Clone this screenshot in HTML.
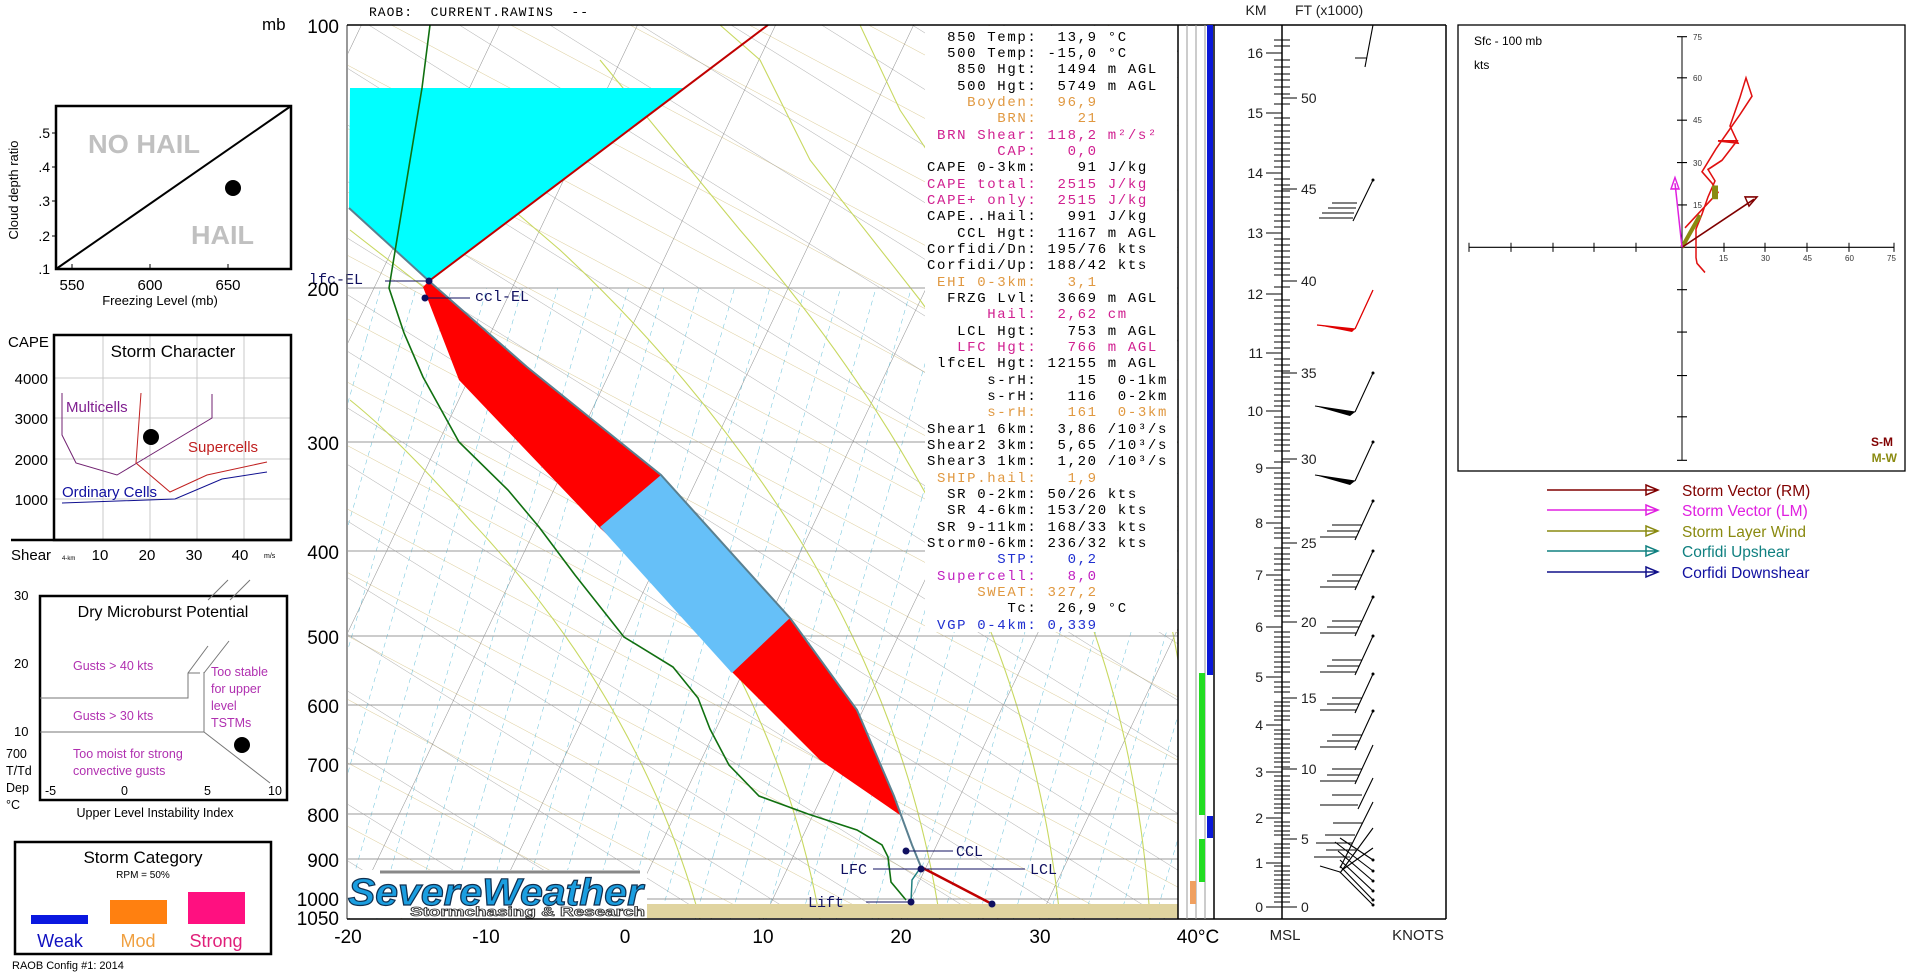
<!DOCTYPE html>
<html><head><meta charset="utf-8"><style>
html,body{margin:0;padding:0;background:#fff;width:1920px;height:980px;overflow:hidden}
svg{display:block}
text{font-family:"Liberation Sans",Arial,sans-serif}
text.mono{font-family:"Liberation Mono","Courier New",monospace;font-size:14px;letter-spacing:1.64px;white-space:pre}
text.lab{font-family:"Liberation Mono","Courier New",monospace;font-size:15px;fill:#101060}
</style></head><body>
<svg width="1920" height="980" viewBox="0 0 1920 980" xmlns="http://www.w3.org/2000/svg">
<defs>
<pattern id="iso" patternUnits="userSpaceOnUse" width="124.6" height="400" patternTransform="translate(625 919) rotate(25.5)">
<line x1="0" y1="0" x2="0" y2="400" stroke="#707070" stroke-width="0.8"/></pattern>
<pattern id="dn" patternUnits="userSpaceOnUse" width="48" height="400" patternTransform="translate(600 0) rotate(-58)">
<line x1="0" y1="0" x2="0" y2="400" stroke="#909090" stroke-width="0.7"/></pattern>
<pattern id="tan" patternUnits="userSpaceOnUse" width="56" height="400" patternTransform="translate(620 20) rotate(-62)">
<line x1="0" y1="0" x2="0" y2="400" stroke="#d8c890" stroke-width="0.9"/></pattern>
<pattern id="mr" patternUnits="userSpaceOnUse" width="34" height="400" patternTransform="translate(640 0) rotate(16)">
<line x1="0" y1="0" x2="0" y2="400" stroke="#40b0d0" stroke-width="0.8" stroke-dasharray="5,4"/></pattern>
<clipPath id="plot"><rect x="348" y="25" width="830" height="894"/></clipPath>
<clipPath id="low"><rect x="348" y="288" width="830" height="631"/></clipPath>
</defs>

<g clip-path="url(#plot)">
<rect x="348" y="25" width="830" height="894" fill="url(#tan)"/>
<rect x="348" y="25" width="830" height="894" fill="url(#dn)"/>
<rect x="348" y="25" width="830" height="894" fill="url(#iso)"/>
<rect x="348" y="288" width="830" height="631" fill="url(#mr)" clip-path="url(#low)"/>
<g fill="none" stroke="#c8d860" stroke-width="1.1">
<path d="M700 919 Q640 700 470 520 Q400 440 350 400"/>
<path d="M820 919 Q780 700 640 520 Q540 400 440 300 L350 230"/>
<path d="M940 919 Q910 720 800 540 Q700 380 560 250 L420 130"/>
<path d="M1060 919 Q1040 720 950 540 Q870 380 740 230 L600 60"/>
<path d="M1150 919 Q1140 760 1090 620 Q1030 450 920 300 L810 160 L760 60 L720 25"/>
<path d="M1178 660 Q1150 500 1080 380 L980 230 L900 110 L860 25"/>
</g>
<g stroke="#999" stroke-width="1">
<line x1="348" y1="288" x2="1178" y2="288"/><line x1="348" y1="442" x2="1178" y2="442"/>
<line x1="348" y1="551" x2="1178" y2="551"/><line x1="348" y1="636" x2="1178" y2="636"/>
<line x1="348" y1="705" x2="1178" y2="705"/><line x1="348" y1="764" x2="1178" y2="764"/>
<line x1="348" y1="814" x2="1178" y2="814"/><line x1="348" y1="859" x2="1178" y2="859"/>
<line x1="348" y1="899" x2="1178" y2="899"/>
</g>
</g>
<rect x="925" y="26" width="252" height="606" fill="#fff"/>

<polygon points="350,88 683,88 429,281 349,208" fill="#00ffff"/>
<line x1="349" y1="208" x2="429" y2="281" stroke="#5a8090" stroke-width="2"/>
<line x1="429" y1="281" x2="768" y2="25" stroke="#c00000" stroke-width="2"/>
<polygon points="429,281 527,367 661,475 790,618 857,710 894,796 912,845 921,867 900,815 820,760 732,672 666,588 600,528 459,380 423,287" fill="#ff0000"/>
<polygon points="661,475 790,618 732,673 600,527" fill="#66c0f8"/>
<polyline points="429,281 527,367 661,475 790,618 857,710 894,796 912,845 921,867" fill="none" stroke="#5a8090" stroke-width="2"/>
<line x1="921" y1="867" x2="992" y2="904" stroke="#c00000" stroke-width="2.5"/>
<polyline points="921,867 912,880 911,902" fill="none" stroke="#208080" stroke-width="1.5"/>
<polyline points="430,25 422,88 398,233 389,288 404,333 423,377 459,442 508,490 539,527 575,575 624,637 673,667 698,698 710,729 729,765 759,796 808,814 857,830 882,845 888,857 891,882 906,900" fill="none" stroke="#107010" stroke-width="1.6"/>
<rect x="646" y="904" width="532" height="14" fill="#e0d4a0"/>
<g fill="#101060">
<circle cx="429" cy="281" r="3.5"/><circle cx="425" cy="298" r="3.5"/>
<circle cx="906" cy="851" r="3.5"/><circle cx="921" cy="869" r="3.5"/>
<circle cx="911" cy="902" r="3.5"/><circle cx="992" cy="904" r="3.5"/>
</g>
<g stroke="#101060" stroke-width="1">
<line x1="385" y1="281" x2="429" y2="281"/><line x1="425" y1="298" x2="470" y2="298"/>
<line x1="906" y1="851" x2="953" y2="851"/><line x1="921" y1="869" x2="1025" y2="869"/>
<line x1="873" y1="869" x2="921" y2="869"/><line x1="866" y1="902" x2="911" y2="902"/>
</g>
<text x="309" y="284" class="lab">lfc-EL</text>
<text x="475" y="301" class="lab">ccl-EL</text>
<text x="956" y="856" class="lab">CCL</text>
<text x="1030" y="874" class="lab">LCL</text>
<text x="840" y="874" class="lab">LFC</text>
<text x="808" y="907" class="lab">Lift</text>

<rect x="345" y="870" width="302" height="48" fill="#fff"/>
<line x1="380" y1="872" x2="640" y2="872" stroke="#888" stroke-width="3"/>
<text x="348" y="905" font-size="38" font-weight="bold" font-style="italic" fill="#1a9ee0" stroke="#103050" stroke-width="1.2" textLength="295" lengthAdjust="spacingAndGlyphs">SevereWeather</text>
<text x="410" y="916" font-size="13" font-weight="bold" fill="#fff" stroke="#333" stroke-width="0.8" textLength="235" lengthAdjust="spacingAndGlyphs">Stormchasing &amp; Research</text>

<line x1="347" y1="25" x2="347" y2="919" stroke="#555" stroke-width="1.2"/>
<line x1="347" y1="25" x2="1446" y2="25" stroke="#000" stroke-width="1.5"/>
<line x1="347" y1="919" x2="1446" y2="919" stroke="#000" stroke-width="1.5"/>
<line x1="1446" y1="25" x2="1446" y2="919" stroke="#000" stroke-width="1.5"/>
<line x1="1178" y1="25" x2="1178" y2="919" stroke="#000" stroke-width="1.5"/>
<line x1="1187" y1="25" x2="1187" y2="919" stroke="#999"/>
<line x1="1196" y1="25" x2="1196" y2="919" stroke="#999"/>
<line x1="1205" y1="25" x2="1205" y2="919" stroke="#999"/>
<line x1="1214" y1="25" x2="1214" y2="919" stroke="#000" stroke-width="1.5"/>
<rect x="1207" y="25" width="6" height="650" fill="#0a18d8"/>
<rect x="1207" y="816" width="6" height="22" fill="#0a18d8"/>
<rect x="1199" y="673" width="6" height="142" fill="#22dd22"/>
<rect x="1199" y="839" width="6" height="43" fill="#22dd22"/>
<rect x="1190" y="881" width="6" height="23" fill="#f0a060"/>

<g font-size="19" text-anchor="end" fill="#000">
<text x="339" y="33">100</text><text x="339" y="296">200</text><text x="339" y="450">300</text>
<text x="339" y="559">400</text><text x="339" y="644">500</text><text x="339" y="713">600</text>
<text x="339" y="772">700</text><text x="339" y="822">800</text><text x="339" y="867">900</text>
<text x="339" y="906">1000</text><text x="339" y="925">1050</text>
</g>
<text x="262" y="30" font-size="17">mb</text>
<text x="369" y="16" class="mono" style="font-size:13px;letter-spacing:1px">RAOB:  CURRENT.RAWINS  --</text>
<g font-size="19" text-anchor="middle">
<text x="348" y="943">-20</text><text x="486" y="943">-10</text><text x="625" y="943">0</text>
<text x="763" y="943">10</text><text x="901" y="943">20</text><text x="1040" y="943">30</text>
<text x="1198" y="943">40°C</text>
</g>

<g>
<text x="927" y="41" class="mono">  850 Temp:  13,9 °C</text>
<text x="927" y="57" class="mono">  500 Temp: -15,0 °C</text>
<text x="927" y="73" class="mono">   850 Hgt:  1494 m AGL</text>
<text x="927" y="90" class="mono">   500 Hgt:  5749 m AGL</text>
<text x="927" y="106" class="mono" fill="#e09840">    Boyden:  96,9</text>
<text x="927" y="122" class="mono" fill="#e09840">       BRN:    21</text>
<text x="927" y="139" class="mono" fill="#d02090"> BRN Shear: 118,2 m²/s²</text>
<text x="927" y="155" class="mono" fill="#d02090">       CAP:   0,0</text>
<text x="927" y="171" class="mono">CAPE 0-3km:    91 J/kg</text>
<text x="927" y="188" class="mono" fill="#d02090">CAPE total:  2515 J/kg</text>
<text x="927" y="204" class="mono" fill="#d02090">CAPE+ only:  2515 J/kg</text>
<text x="927" y="220" class="mono">CAPE..Hail:   991 J/kg</text>
<text x="927" y="237" class="mono">   CCL Hgt:  1167 m AGL</text>
<text x="927" y="253" class="mono">Corfidi/Dn: 195/76 kts</text>
<text x="927" y="269" class="mono">Corfidi/Up: 188/42 kts</text>
<text x="927" y="286" class="mono" fill="#e09840"> EHI 0-3km:   3,1</text>
<text x="927" y="302" class="mono">  FRZG Lvl:  3669 m AGL</text>
<text x="927" y="318" class="mono" fill="#d02090">      Hail:  2,62 cm</text>
<text x="927" y="335" class="mono">   LCL Hgt:   753 m AGL</text>
<text x="927" y="351" class="mono" fill="#d02090">   LFC Hgt:   766 m AGL</text>
<text x="927" y="367" class="mono"> lfcEL Hgt: 12155 m AGL</text>
<text x="927" y="384" class="mono">      s-rH:    15  0-1km</text>
<text x="927" y="400" class="mono">      s-rH:   116  0-2km</text>
<text x="927" y="416" class="mono" fill="#e09840">      s-rH:   161  0-3km</text>
<text x="927" y="433" class="mono">Shear1 6km:  3,86 /10³/s</text>
<text x="927" y="449" class="mono">Shear2 3km:  5,65 /10³/s</text>
<text x="927" y="465" class="mono">Shear3 1km:  1,20 /10³/s</text>
<text x="927" y="482" class="mono" fill="#e09840"> SHIP.hail:   1,9</text>
<text x="927" y="498" class="mono">  SR 0-2km: 50/26 kts</text>
<text x="927" y="514" class="mono">  SR 4-6km: 153/20 kts</text>
<text x="927" y="531" class="mono"> SR 9-11km: 168/33 kts</text>
<text x="927" y="547" class="mono">Storm0-6km: 236/32 kts</text>
<text x="927" y="563" class="mono" fill="#2030d0">       STP:   0,2</text>
<text x="927" y="580" class="mono" fill="#c020c0"> Supercell:   8,0</text>
<text x="927" y="596" class="mono" fill="#e09840">     SWEAT: 327,2</text>
<text x="927" y="612" class="mono">        Tc:  26,9 °C</text>
<text x="927" y="629" class="mono" fill="#2030d0"> VGP 0-4km: 0,339</text>
</g>

<line x1="1282" y1="25" x2="1282" y2="919" stroke="#000" stroke-width="1.5"/>
<g stroke="#000" stroke-width="1">
<path d="M1274 40h16M1274 46h16M1274 60h16M1274 67h16M1274 74h16M1274 80h16M1274 87h16M1274 94h16M1274 104h16M1274 118h16M1274 125h16M1274 131h16M1274 137h16M1274 143h16M1274 149h16M1274 155h16M1274 161h16M1274 167h16M1274 179h16M1274 185h16M1274 191h16M1274 197h16M1274 203h16M1274 209h16M1274 215h16M1274 221h16M1274 227h16M1274 239h16M1274 245h16M1274 251h16M1274 257h16M1274 263h16M1274 269h16M1274 275h16M1274 287h16M1274 300h16M1274 306h16M1274 312h16M1274 318h16M1274 324h16M1274 330h16M1274 336h16M1274 342h16M1274 348h16M1274 359h16M1274 365h16M1274 371h16M1274 377h16M1274 383h16M1274 389h16M1274 395h16M1274 401h16M1274 406h16M1274 417h16M1274 423h16M1274 428h16M1274 434h16M1274 440h16M1274 445h16M1274 451h16M1274 462h16M1274 473h16M1274 478h16M1274 484h16M1274 489h16M1274 495h16M1274 500h16M1274 506h16M1274 511h16M1274 517h16M1274 528h16M1274 533h16M1274 538h16M1274 548h16M1274 554h16M1274 559h16M1274 564h16M1274 570h16M1274 580h16M1274 585h16M1274 590h16M1274 596h16M1274 601h16M1274 606h16M1274 611h16M1274 616h16M1274 632h16M1274 637h16M1274 642h16M1274 647h16M1274 652h16M1274 657h16M1274 662h16M1274 667h16M1274 672h16M1274 682h16M1274 687h16M1274 692h16M1274 702h16M1274 706h16M1274 711h16M1274 716h16M1274 720h16M1274 730h16M1274 734h16M1274 739h16M1274 744h16M1274 748h16M1274 753h16M1274 758h16M1274 762h16M1274 767h16M1274 776h16M1274 781h16M1274 786h16M1274 790h16M1274 795h16M1274 799h16M1274 804h16M1274 808h16M1274 813h16M1274 822h16M1274 826h16M1274 831h16M1274 835h16M1274 844h16M1274 848h16M1274 853h16M1274 857h16M1274 866h16M1274 871h16M1274 875h16M1274 880h16M1274 884h16M1274 888h16M1274 893h16M1274 897h16M1274 902h16"/>
<path d="M1266 53h16M1266 113h16M1266 173h16M1266 233h16M1266 294h16M1266 353h16M1266 411h16M1266 468h16M1266 523h16M1266 575h16M1266 627h16M1266 677h16M1266 725h16M1266 772h16M1266 818h16M1266 863h16M1266 907h16"/>
<path d="M1282 98h15M1282 189h15M1282 281h15M1282 373h15M1282 459h15M1282 543h15M1282 622h15M1282 698h15M1282 769h15M1282 839h15M1282 907h15"/>
</g>
<g font-size="14" text-anchor="end" fill="#222">
<text x="1263" y="58">16</text><text x="1263" y="118">15</text><text x="1263" y="178">14</text><text x="1263" y="238">13</text>
<text x="1263" y="299">12</text><text x="1263" y="358">11</text><text x="1263" y="416">10</text><text x="1263" y="473">9</text>
<text x="1263" y="528">8</text><text x="1263" y="580">7</text><text x="1263" y="632">6</text><text x="1263" y="682">5</text>
<text x="1263" y="730">4</text><text x="1263" y="777">3</text><text x="1263" y="823">2</text><text x="1263" y="868">1</text><text x="1263" y="912">0</text>
</g>
<g font-size="14" fill="#222">
<text x="1301" y="103">50</text><text x="1301" y="194">45</text><text x="1301" y="286">40</text><text x="1301" y="378">35</text>
<text x="1301" y="464">30</text><text x="1301" y="548">25</text><text x="1301" y="627">20</text><text x="1301" y="703">15</text>
<text x="1301" y="774">10</text><text x="1301" y="844">5</text><text x="1301" y="912">0</text>
</g>
<text x="1256" y="15" font-size="14" text-anchor="middle" fill="#222">KM</text>
<text x="1295" y="15" font-size="14" fill="#222">FT (x1000)</text>
<text x="1285" y="940" font-size="15" text-anchor="middle" fill="#222">MSL</text>
<text x="1418" y="940" font-size="15" text-anchor="middle" fill="#222">KNOTS</text>

<g stroke="#000" stroke-width="1.1" fill="none">
<path d="M1373 25L1365 67M1355 58h12"/>
<path d="M1373 180L1353 221M1357 203h-25M1356 208h-28M1354 213h-32M1353 218h-34"/>
<path d="M1373 373L1355 412M1355 412l-40 -6"/>
<path d="M1373 442L1355 481M1355 481l-40 -6"/>
<path d="M1373 501L1355 540M1362 525h-30M1359 531h-32M1356 537h-36"/>
<path d="M1373 551L1355 590M1362 575h-30M1359 581h-32M1356 587h-36"/>
<path d="M1373 597L1355 636M1362 621h-30M1359 627h-32M1356 633h-36"/>
<path d="M1373 636L1355 675M1362 660h-30M1359 666h-32M1356 672h-36"/>
<path d="M1373 674L1355 713M1362 698h-30M1359 704h-32M1356 710h-36"/>
<path d="M1373 711L1355 750M1362 735h-30M1359 741h-32M1356 747h-36"/>
<path d="M1373 745L1355 784M1362 769h-30M1359 775h-32M1356 781h-36"/>
<path d="M1373 778L1358 809M1362 795h-30M1358 805h-38"/>
<path d="M1373 802L1340 868M1363 823h-30M1355 835h-30M1352 843h-36"/>
<path d="M1373 828L1340 873M1356 850h-30M1350 857h-36"/>
<path d="M1373 848L1342 870M1373 860L1340 838M1373 871L1335 842M1373 881L1338 851M1373 891L1340 860M1373 900L1340 866M1373 905L1340 872M1340 872L1320 866"/>
</g>
<g fill="#000"><path d="M1355 412l-40 -6l35 10z"/><path d="M1355 481l-40 -6l35 10z"/></g>
<g stroke="#e00000" stroke-width="1.3" fill="none"><path d="M1373 290L1355 329M1355 329l-38 -4"/></g>
<path d="M1355 329l-38 -4l35 7z" fill="#e00000"/>
<g fill="#000"><circle cx="1373" cy="180" r="1.5"/><circle cx="1373" cy="373" r="1.5"/><circle cx="1373" cy="442" r="1.5"/><circle cx="1373" cy="501" r="1.5"/><circle cx="1373" cy="551" r="1.5"/><circle cx="1373" cy="597" r="1.5"/><circle cx="1373" cy="636" r="1.5"/><circle cx="1373" cy="674" r="1.5"/><circle cx="1373" cy="711" r="1.5"/><circle cx="1373" cy="860" r="1.5"/><circle cx="1373" cy="871" r="1.5"/><circle cx="1373" cy="881" r="1.5"/><circle cx="1373" cy="891" r="1.5"/><circle cx="1373" cy="900" r="1.5"/><circle cx="1373" cy="905" r="1.5"/></g>

<!-- hodograph (geometry scaled vertically) -->
<rect x="1458" y="25" width="447" height="446" fill="none" stroke="#000" stroke-width="1.3"/>
<text x="1474" y="45" font-size="12">Sfc - 100 mb</text>
<text x="1474" y="69" font-size="12">kts</text>
<g transform="matrix(1 0 0 1.145 0 0)">
<g stroke="#000" stroke-width="1">
<line x1="1469" y1="216" x2="1894" y2="216"/><line x1="1682" y1="32" x2="1682" y2="402"/>
<path d="M1469 212v8M1511 212v8M1553 212v8M1594 212v8M1636 212v8M1724 212v8M1765 212v8M1807 212v8M1849 212v8M1894 212v8"/>
<path d="M1677 32h10M1677 68h10M1677 105h10M1677 142h10M1677 179h10M1677 253h10M1677 290h10M1677 328h10M1677 364h10M1677 402h10"/>
</g>
<polyline points="1705,238 1697,230 1696,225 1696,200 1702,187 1708,172 1715,158 1708,148 1722,140 1737,123 1718,123 1738,125 1730,110 1740,85 1746,68 1752,84 1740,100 1728,115 1716,130 1702,150 1712,160 1718,168 1685,199" fill="none" stroke="#e01010" stroke-width="1.5"/>
<line x1="1682" y1="216" x2="1700" y2="188" stroke="#8a8a10" stroke-width="4"/>
<rect x="1712" y="162" width="6" height="12" fill="#8a8a10"/>
<line x1="1682" y1="216" x2="1754" y2="174" stroke="#800000" stroke-width="1.5"/>
<path d="M1757 172l-12 0l4 8z" fill="none" stroke="#800000" stroke-width="1.4"/>
<line x1="1682" y1="216" x2="1675" y2="160" stroke="#e020e0" stroke-width="1.5"/>
<path d="M1675 155l-4 10h8z" fill="none" stroke="#e020e0" stroke-width="1.4"/>
</g>
<g font-size="8" fill="#333">
<text x="1693" y="40">75</text><text x="1693" y="81">60</text><text x="1693" y="123">45</text><text x="1693" y="166">30</text><text x="1693" y="208">15</text>
<text x="1719" y="261">15</text><text x="1761" y="261">30</text><text x="1803" y="261">45</text><text x="1845" y="261">60</text><text x="1887" y="261">75</text>
</g>
<text x="1893" y="446" font-size="12" font-weight="bold" fill="#800000" text-anchor="end">S-M</text>
<text x="1897" y="462" font-size="12" font-weight="bold" fill="#8a8a10" text-anchor="end">M-W</text>
<g stroke-width="1.5" fill="none">
<path d="M1547 490h110M1646 485l12 5l-12 5z" stroke="#800000"/>
<path d="M1547 510h110M1646 505l12 5l-12 5z" stroke="#e020e0"/>
<path d="M1547 531h110M1646 526l12 5l-12 5z" stroke="#8a8a10"/>
<path d="M1547 551h110M1646 546l12 5l-12 5z" stroke="#108080"/>
<path d="M1547 572h110M1646 567l12 5l-12 5z" stroke="#10108a"/>
</g>
<g font-size="15.5">
<text x="1682" y="496" fill="#800000">Storm Vector (RM)</text>
<text x="1682" y="516" fill="#e020e0">Storm Vector (LM)</text>
<text x="1682" y="537" fill="#8a8a10">Storm Layer Wind</text>
<text x="1682" y="557" fill="#108080">Corfidi Upshear</text>
<text x="1682" y="578" fill="#1010a0">Corfidi Downshear</text>
</g>

<rect x="56" y="106" width="235" height="163" fill="none" stroke="#000" stroke-width="2.5"/>
<line x1="56" y1="269" x2="291" y2="106" stroke="#000" stroke-width="2"/>
<text x="88" y="153" font-size="26" font-weight="bold" fill="#c0c0c0" textLength="112" lengthAdjust="spacingAndGlyphs">NO HAIL</text>
<text x="191" y="244" font-size="26" font-weight="bold" fill="#c0c0c0" textLength="63" lengthAdjust="spacingAndGlyphs">HAIL</text>
<circle cx="233" cy="188" r="8" fill="#000"/>
<g stroke="#000"><path d="M72 264v5M150 264v5M228 264v5M52 133h4M52 167h4M52 201h4M52 236h4"/></g>
<g font-size="14" text-anchor="end"><text x="50" y="138">.5</text><text x="50" y="172">.4</text><text x="50" y="206">.3</text><text x="50" y="241">.2</text><text x="50" y="274">.1</text></g>
<g font-size="15" text-anchor="middle"><text x="72" y="290">550</text><text x="150" y="290">600</text><text x="228" y="290">650</text></g>
<text x="160" y="305" font-size="13" text-anchor="middle">Freezing Level (mb)</text>
<text transform="translate(18 190) rotate(-90)" font-size="13" text-anchor="middle">Cloud depth ratio</text>

<g stroke="#c8c8c8"><path d="M54 378h237M54 418h237M54 459h237M54 499h237M103 335v205M150 335v205M197 335v205M244 335v205"/></g>
<rect x="54" y="335" width="237" height="205" fill="none" stroke="#000" stroke-width="2.5"/>
<line x1="11" y1="540" x2="291" y2="540" stroke="#000" stroke-width="2.5"/>
<text x="8" y="347" font-size="15">CAPE</text>
<text x="173" y="357" font-size="17" text-anchor="middle">Storm Character</text>
<g font-size="15" text-anchor="end"><text x="48" y="384">4000</text><text x="48" y="424">3000</text><text x="48" y="465">2000</text><text x="48" y="505">1000</text></g>
<polyline points="62,393 62,435 76,463 117,475 137,463 212,418 212,394" fill="none" stroke="#702070"/>
<polyline points="141,393 136,463 170,492 207,475 267,462" fill="none" stroke="#c02020"/>
<polyline points="62,503 175,499 222,479 267,472" fill="none" stroke="#101090"/>
<circle cx="151" cy="437" r="8" fill="#000"/>
<text x="66" y="412" font-size="15" fill="#802090">Multicells</text>
<text x="188" y="452" font-size="15" fill="#c02020">Supercells</text>
<text x="62" y="497" font-size="15" fill="#1010a0">Ordinary Cells</text>
<text x="11" y="560" font-size="15">Shear</text>
<text x="62" y="560" font-size="6">4-km</text>
<g font-size="15" text-anchor="middle"><text x="100" y="560">10</text><text x="147" y="560">20</text><text x="194" y="560">30</text><text x="240" y="560">40</text></g>
<text x="264" y="558" font-size="7">m/s</text>

<rect x="40" y="596" width="247" height="204" fill="none" stroke="#000" stroke-width="2.5"/>
<g stroke="#777" stroke-width="1" fill="none">
<path d="M40 698h148v-25l20 -27M204 673l25 -32M188 673l12 0M40 732h164v-60M204 732l66 51M208 600l20 -20M230 600l20 -20"/>
</g>
<text x="163" y="617" font-size="16" text-anchor="middle">Dry Microburst Potential</text>
<g font-size="13" fill="#000"><text x="14" y="600">30</text><text x="14" y="668">20</text><text x="14" y="736">10</text></g>
<g font-size="12.5" fill="#b030b0">
<text x="73" y="670">Gusts &gt; 40 kts</text><text x="73" y="720">Gusts &gt; 30 kts</text>
<text x="211" y="676">Too stable</text><text x="211" y="693">for upper</text><text x="211" y="710">level</text><text x="211" y="727">TSTMs</text>
<text x="73" y="758">Too moist for strong</text><text x="73" y="775">convective gusts</text>
</g>
<circle cx="242" cy="745" r="8" fill="#000"/>
<g font-size="12.5"><text x="45" y="795">-5</text><text x="121" y="795">0</text><text x="204" y="795">5</text><text x="268" y="795">10</text></g>
<text x="155" y="817" font-size="12.5" text-anchor="middle">Upper Level Instability Index</text>
<g font-size="12.5"><text x="6" y="758">700</text><text x="6" y="775">T/Td</text><text x="6" y="792">Dep</text><text x="6" y="809">°C</text></g>

<rect x="15" y="842" width="256" height="112" fill="none" stroke="#000" stroke-width="2.5"/>
<text x="143" y="863" font-size="17" text-anchor="middle">Storm Category</text>
<text x="143" y="878" font-size="10" text-anchor="middle">RPM = 50%</text>
<rect x="31" y="915" width="57" height="9" fill="#0a18e0"/>
<rect x="110" y="900" width="57" height="24" fill="#ff8010"/>
<rect x="188" y="892" width="57" height="32" fill="#ff1080"/>
<g font-size="18" text-anchor="middle"><text x="60" y="947" fill="#1010c0">Weak</text><text x="138" y="947" fill="#f0a040">Mod</text><text x="216" y="947" fill="#e0207a">Strong</text></g>
<text x="12" y="969" font-size="11">RAOB Config #1: 2014</text>
</svg>
</body></html>
